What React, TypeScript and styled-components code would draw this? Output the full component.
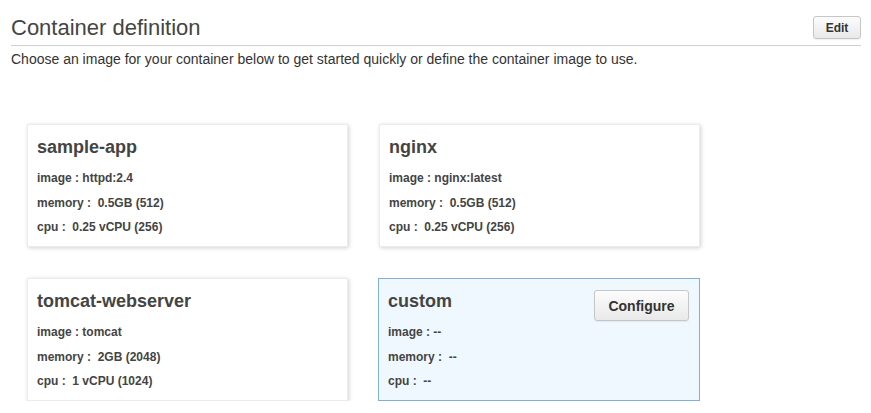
import React from "react";
import styled, { createGlobalStyle } from "styled-components";

const Global = createGlobalStyle`
  html, body { margin: 0; padding: 0; background: #fff; }
  body { font-family: "Liberation Sans", Arial, Helvetica, sans-serif; color: #444; }
  * { box-sizing: border-box; }
`;

const Page = styled.div`
  padding: 0 10px 0 11px;
`;

const Header = styled.div`
  display: flex;
  align-items: center;
  justify-content: space-between;
  padding: 15px 0 5px;
  border-bottom: 1px solid #cfcfcf;
`;

const Title = styled.h2`
  margin: 0;
  font-size: 22px;
  line-height: 25px;
  font-weight: normal;
  color: #444;
`;

const Button = styled.button<{ $size?: "sm" | "md" }>`
  font-family: inherit;
  font-weight: bold;
  color: #333;
  border: 1px solid #c6c6c6;
  border-radius: 3px;
  background: linear-gradient(#fcfcfc, #e9e9e9);
  box-shadow: 0 1px 1px rgba(0, 0, 0, 0.06);
  cursor: pointer;
  padding: 0;
  font-size: ${(p) => (p.$size === "md" ? "14px" : "12px")};
  height: ${(p) => (p.$size === "md" ? "31px" : "23px")};
  width: ${(p) => (p.$size === "md" ? "95px" : "48px")};
`;

const Subtitle = styled.p`
  margin: 3px 0 0;
  font-size: 14px;
  line-height: 20px;
  color: #333;
`;

const Grid = styled.div`
  display: grid;
  grid-template-columns: 321px 321px;
  column-gap: 31px;
  row-gap: 31px;
  margin: 55px 0 0 16px;
`;

const Card = styled.div<{ $custom?: boolean }>`
  display: grid;
  grid-template-columns: 1fr auto;
  align-items: start;
  height: 123px;
  padding: 11px 10px 10px 9px;
  background: ${(p) => (p.$custom ? "#f0f8ff" : "#fff")};
  border: 1px solid ${(p) => (p.$custom ? "#7fb0dc" : "#ececec")};
  box-shadow: ${(p) => (p.$custom ? "none" : "1px 1px 4px rgba(0,0,0,0.18)")};
  margin-left: ${(p) => (p.$custom ? "-1px" : "0")};
`;

const CardBody = styled.div`
  display: flex;
  flex-direction: column;
`;

const CardTitle = styled.h3`
  margin: 0 0 8px;
  font-size: 18px;
  line-height: 22px;
  font-weight: bold;
  color: #444;
`;

const Row = styled.div`
  font-size: 12px;
  line-height: 24.5px;
  font-weight: bold;
  color: #444;
  white-space: pre;
`;

type Item = { name: string; image: string; memory: string; cpu: string; custom?: boolean };

const items: Item[] = [
  { name: "sample-app", image: "httpd:2.4", memory: "0.5GB (512)", cpu: "0.25 vCPU (256)" },
  { name: "nginx", image: "nginx:latest", memory: "0.5GB (512)", cpu: "0.25 vCPU (256)" },
  { name: "tomcat-webserver", image: "tomcat", memory: "2GB (2048)", cpu: "1 vCPU (1024)" },
  { name: "custom", image: "--", memory: "--", cpu: "--", custom: true },
];

export default function App() {
  return (
    <Page>
      <Global />
      <Header>
        <Title>Container definition</Title>
        <Button $size="sm">Edit</Button>
      </Header>
      <Subtitle>
        Choose an image for your container below to get started quickly or define the container image to use.
      </Subtitle>
      <Grid>
        {items.map((it) => (
          <Card key={it.name} $custom={it.custom}>
            <CardBody>
              <CardTitle>{it.name}</CardTitle>
              <Row>{`image : ${it.image}`}</Row>
              <Row>{`memory :  ${it.memory}`}</Row>
              <Row>{`cpu :  ${it.cpu}`}</Row>
            </CardBody>
            {it.custom && <Button $size="md">Configure</Button>}
          </Card>
        ))}
      </Grid>
    </Page>
  );
}
